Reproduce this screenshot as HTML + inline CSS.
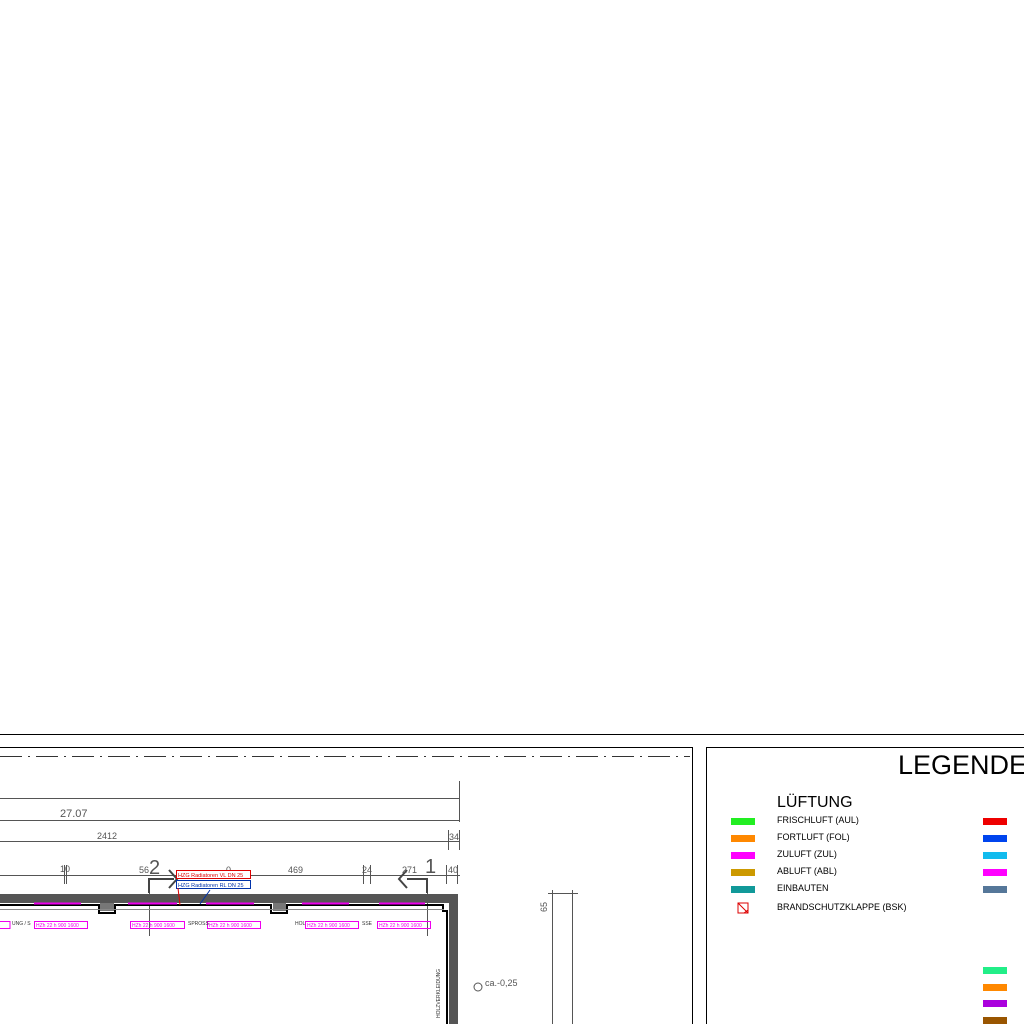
<!DOCTYPE html><html><head><style>body{margin:0;background:#fff;width:1024px;height:1024px;overflow:hidden}svg{display:block}</style></head><body>
<svg width="1024" height="1024" xmlns="http://www.w3.org/2000/svg" font-family="Liberation Sans, sans-serif">
<line x1="0" y1="734.5" x2="1024" y2="734.5" stroke="#000"/>
<line x1="0" y1="747.5" x2="692" y2="747.5" stroke="#000"/>
<line x1="692.5" y1="747" x2="692.5" y2="1024" stroke="#000"/>
<line x1="0" y1="756.5" x2="690" y2="756.5" stroke="#333" stroke-dasharray="22,6,2,6"/>
<line x1="706.5" y1="747" x2="706.5" y2="1024" stroke="#000"/>
<line x1="706" y1="747.5" x2="1024" y2="747.5" stroke="#000"/>
<g stroke="#555" fill="none">
<line x1="0" y1="798.5" x2="460" y2="798.5"/>
<line x1="0" y1="820.5" x2="460" y2="820.5"/>
<line x1="0" y1="841.5" x2="460" y2="841.5"/>
<line x1="0" y1="875.5" x2="460" y2="875.5"/>
<line x1="459.5" y1="781" x2="459.5" y2="822"/>
<line x1="448.5" y1="830" x2="448.5" y2="850"/><line x1="459.5" y1="830" x2="459.5" y2="850"/>
<line x1="64.5" y1="865" x2="64.5" y2="884"/><line x1="66.5" y1="865" x2="66.5" y2="884"/>
<line x1="363.5" y1="865" x2="363.5" y2="884"/><line x1="370.5" y1="865" x2="370.5" y2="884"/>
<line x1="446.5" y1="865" x2="446.5" y2="884"/><line x1="457.5" y1="865" x2="457.5" y2="884"/>
<path d="M149 893 V879 H174 M407 879 H427 V893" stroke="#444" stroke-width="2"/>
<path d="M169 870 L177 879 L169 888 M407 870 L399 879 L407 888" stroke="#444" stroke-width="2"/>
<line x1="149.5" y1="893" x2="149.5" y2="936"/><line x1="427.5" y1="893" x2="427.5" y2="936"/>
<line x1="548" y1="893.5" x2="578" y2="893.5"/><line x1="552.5" y1="890" x2="552.5" y2="1024"/><line x1="572.5" y1="890" x2="572.5" y2="1024"/>
</g>
<g fill="#555" font-size="11">
<text x="60" y="817">27.07</text>
<text x="97" y="839" font-size="9">2412</text>
<text x="449" y="840" font-size="9">34</text>
<text x="60" y="872" font-size="9">10</text>
<text x="139" y="873" font-size="9">56</text>
<text x="226" y="873" font-size="9">0</text>
<text x="288" y="873" font-size="9">469</text>
<text x="362" y="873" font-size="9">24</text>
<text x="402" y="873" font-size="9">271</text>
<text x="448" y="873" font-size="9">40</text>
<text x="149" y="874" font-size="20">2</text>
<text x="425" y="873" font-size="20">1</text>
<text x="547" y="912" font-size="9" transform="rotate(-90 547 912)">65</text>
<text x="485" y="986" font-size="9">ca.-0,25</text>
</g>
<circle cx="478" cy="987" r="4" fill="none" stroke="#555"/>
<rect x="0" y="894" width="458" height="9" fill="#555"/>
<rect x="449" y="894" width="9" height="130" fill="#555"/>
<path d="M0 905 H99 V913 H115 V905 H271 V913 H287 V905 H443 V911 H447 V1024" stroke="#000" stroke-width="2" fill="none"/>
<rect x="100" y="903" width="14" height="8" fill="#777"/><rect x="273" y="903" width="13" height="8" fill="#777"/>
<line x1="0" y1="909.5" x2="444" y2="909.5" stroke="#888"/>
<g stroke="#e0e" stroke-width="2">
<line x1="34" y1="903.5" x2="81" y2="903.5"/><line x1="128" y1="903.5" x2="177" y2="903.5"/><line x1="206" y1="903.5" x2="254" y2="903.5"/><line x1="302" y1="903.5" x2="349" y2="903.5"/><line x1="379" y1="903.5" x2="425" y2="903.5"/>
</g>
<g fill="none" stroke="#e0e">
<rect x="34.5" y="921.5" width="53" height="7"/><rect x="130.5" y="921.5" width="54" height="7"/><rect x="207.5" y="921.5" width="53" height="7"/><rect x="305.5" y="921.5" width="53" height="7"/><rect x="377.5" y="921.5" width="53" height="7"/><rect x="-2" y="921.5" width="12" height="7"/>
</g>
<g fill="#e0e" font-size="5"><text x="36" y="927">HZh 22 h 900 1600</text><text x="132" y="927">HZh 22 h 900 1600</text><text x="209" y="927">HZh 22 h 900 1600</text><text x="307" y="927">HZh 22 h 900 1600</text><text x="379" y="927">HZh 22 h 900 1600</text></g>
<g fill="#333" font-size="5"><text x="12" y="925">UNG / S</text><text x="188" y="925">SPROSS</text><text x="295" y="925">HOL</text><text x="362" y="925">SSE</text><text x="440" y="1018" transform="rotate(-90 440 1018)">HOLZVERKLEIDUNG</text></g>
<rect x="176.5" y="870.5" width="74" height="8" fill="#fff" stroke="#d00"/><text x="178" y="877" font-size="5.5" fill="#d00">HZG Radiatoren VL DN 25</text>
<rect x="176.5" y="880.5" width="74" height="8" fill="#fff" stroke="#03a"/><text x="178" y="887" font-size="5.5" fill="#03a">HZG Radiatoren RL DN 25</text>
<line x1="178" y1="888" x2="180" y2="905" stroke="#d00"/><line x1="210" y1="890" x2="200" y2="904" stroke="#03a"/>
<text x="898" y="774" font-size="27">LEGENDE</text>
<text x="777" y="807" font-size="16">LÜFTUNG</text>
<g font-size="9" fill="#000">
<text x="777" y="823">FRISCHLUFT (AUL)</text><text x="777" y="840">FORTLUFT (FOL)</text><text x="777" y="857">ZULUFT (ZUL)</text><text x="777" y="874">ABLUFT (ABL)</text><text x="777" y="891">EINBAUTEN</text><text x="777" y="910">BRANDSCHUTZKLAPPE (BSK)</text>
</g>
<rect x="731" y="818" width="24" height="7" fill="#2e2"/><rect x="731" y="835" width="24" height="7" fill="#f80"/><rect x="731" y="852" width="24" height="7" fill="#f0f"/><rect x="731" y="869" width="24" height="7" fill="#c90"/><rect x="731" y="886" width="24" height="7" fill="#199"/>
<path d="M738 903 H748 V913 H738 Z M738 903 L748 913 M744 913 L748 910" stroke="#d00" fill="none"/>
<rect x="983" y="818" width="24" height="7" fill="#e00"/><rect x="983" y="835" width="24" height="7" fill="#04e"/><rect x="983" y="852" width="24" height="7" fill="#1be"/><rect x="983" y="869" width="24" height="7" fill="#f0f"/><rect x="983" y="886" width="24" height="7" fill="#579"/>
<rect x="983" y="967" width="24" height="7" fill="#2e8"/><rect x="983" y="984" width="24" height="7" fill="#f80"/><rect x="983" y="1000" width="24" height="7" fill="#a0d"/><rect x="983" y="1017" width="24" height="7" fill="#950"/>
</svg></body></html>
